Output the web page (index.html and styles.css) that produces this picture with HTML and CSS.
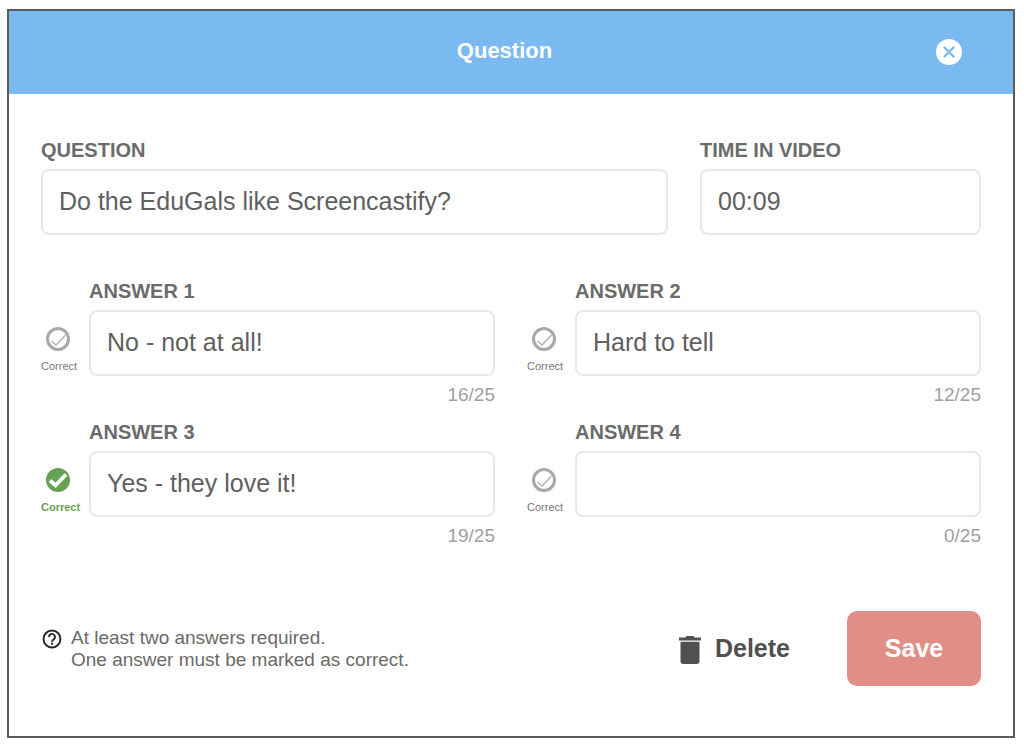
FILE: index.html
```html
<!DOCTYPE html>
<html lang="en">
<head>
<meta charset="utf-8">
<title>Question</title>
<link rel="stylesheet" href="styles.css">
</head>
<body>
<form class="dialog">
  <header class="dialog-header">
    <h1 class="dialog-title">Question</h1>
    <button class="close" type="button" aria-label="Close">
      <svg width="26" height="26" viewBox="0 0 26 26"><circle cx="13" cy="13" r="13" fill="#fff"/><path d="M8.500 8.500l9 9M17.500 8.500l-9 9" stroke="#7abaf0" stroke-width="2.400" stroke-linecap="round"/></svg>
    </button>
  </header>
  <main class="dialog-body">
    <div class="top-row">
      <div class="field">
        <label class="field-label" for="question">QUESTION</label>
        <input class="text-box" id="question" type="text" value="Do the EduGals like Screencastify?">
      </div>
      <div class="field">
        <label class="field-label" for="time">TIME IN VIDEO</label>
        <input class="text-box" id="time" type="text" value="00:09">
      </div>
    </div>
    <div class="answers">
      <div class="answer">
        <label class="field-label answer-label" for="a1">ANSWER 1</label>
        <label class="mark"><span class="mark-icon"><input class="mark-radio" type="radio" name="correct"><svg class="tick" viewBox="0 0 24 24"><path d="M5.500 14l4.500 4L19.500 8" fill="none" stroke="#b0b0b0" stroke-width="1.300"/></svg></span><span class="mark-text">Correct</span></label>
        <input class="text-box" id="a1" type="text" value="No - not at all!">
        <span class="count">16/25</span>
      </div>
      <div class="answer">
        <label class="field-label answer-label" for="a2">ANSWER 2</label>
        <label class="mark"><span class="mark-icon"><input class="mark-radio" type="radio" name="correct"><svg class="tick" viewBox="0 0 24 24"><path d="M5.500 14l4.500 4L19.500 8" fill="none" stroke="#b0b0b0" stroke-width="1.300"/></svg></span><span class="mark-text">Correct</span></label>
        <input class="text-box" id="a2" type="text" value="Hard to tell">
        <span class="count">12/25</span>
      </div>
      <div class="answer">
        <label class="field-label answer-label" for="a3">ANSWER 3</label>
        <label class="mark mark-chosen"><span class="mark-icon"><input class="mark-radio" type="radio" name="correct" checked><svg class="tick" viewBox="0 0 24 24"><path d="M4 12.500l5.500 4.800L20 6.500" fill="none" stroke="#fff" stroke-width="3.800"/></svg></span><span class="mark-text">Correct</span></label>
        <input class="text-box" id="a3" type="text" value="Yes - they love it!">
        <span class="count">19/25</span>
      </div>
      <div class="answer">
        <label class="field-label answer-label" for="a4">ANSWER 4</label>
        <label class="mark"><span class="mark-icon"><input class="mark-radio" type="radio" name="correct"><svg class="tick" viewBox="0 0 24 24"><path d="M5.500 14l4.500 4L19.500 8" fill="none" stroke="#b0b0b0" stroke-width="1.300"/></svg></span><span class="mark-text">Correct</span></label>
        <input class="text-box" id="a4" type="text" value="">
        <span class="count">0/25</span>
      </div>
    </div>
    <footer class="actions">
      <svg class="help" width="20" height="20" viewBox="0 0 20 20" fill="none" stroke="#262626"><circle cx="10" cy="10" r="8.500" stroke-width="1.900"/><path d="M7 8a3 3 0 1 1 4.700 2.400c-1.100.8-1.700 1.200-1.700 2.300" stroke-width="1.900"/><path d="M10 13.800v1.900" stroke-width="2"/></svg>
      <p class="hint">At least two answers required.<br>One answer must be marked as correct.</p>
      <button class="delete" type="button">
        <svg width="22" height="30" viewBox="0 0 22 30" fill="#505050"><path d="M0 3.500h6.500L7.500 2h7l1 1.500H22v3H0zM1.500 7.800h19V27a3 3 0 0 1-3 3h-13a3 3 0 0 1-3-3z"/></svg>
        Delete
      </button>
      <button class="save" type="submit">Save</button>
    </footer>
  </main>
</form>
</body>
</html>
```
FILE: styles.css
```css
* {
  box-sizing: border-box;
}

body {
  margin: 9px 9px 7px 7px;
  background: #fff;
  font-family: "Liberation Sans", Arial, sans-serif;
  color: #555;
}

button {
  border: 0;
  padding: 0;
  background: none;
  font-family: inherit;
  cursor: pointer;
}

svg {
  display: block;
}

.dialog {
  border: 2px solid #5c5c5c;
}

.dialog-header {
  display: grid;
  grid-template-columns: 1fr auto 1fr;
  align-items: center;
  height: 83px;
  padding: 0 51px 2px 38px;
  background: #7abaf0;
}

.dialog-title {
  grid-column: 2;
  margin: 0;
  padding-bottom: 2px;
  font-size: 22px;
  line-height: 26px;
  color: #fff;
}

.close {
  justify-self: end;
}

.dialog-body {
  padding: 44px 32px 50px;
}

.top-row {
  display: grid;
  grid-template-columns: 627fr 281fr;
  gap: 32px;
}

.field {
  display: grid;
  gap: 7px;
}

.field-label {
  font-size: 20px;
  font-weight: bold;
  line-height: 24px;
  color: #6b6b6b;
}

.text-box {
  width: 100%;
  min-width: 0;
  height: 66px;
  padding: 0 16px 2px;
  border: 2px solid #e8e8e8;
  border-radius: 8px;
  background: #fff;
  font-family: inherit;
  font-size: 25px;
  color: #606060;
}

.answers {
  display: grid;
  grid-template-columns: 1fr 1fr;
  gap: 15px 32px;
  margin-top: 44px;
}

.answer {
  display: grid;
  grid-template-columns: 48px 1fr;
}

.answer-label {
  grid-column: 2;
  margin-bottom: 7px;
}

.mark {
  padding-top: 17px;
  color: #777;
}

.mark-icon {
  display: grid;
  width: 24px;
  margin-left: 5px;
}

.mark-radio,
.tick {
  grid-area: 1 / 1;
  width: 24px;
  height: 24px;
  margin: 0;
}

.mark-radio {
  appearance: none;
  border: 3px solid #a8a8a8;
  border-radius: 50%;
}

.mark-radio:checked {
  border-color: #66a253;
  background: #66a253;
}

.tick {
  pointer-events: none;
}

.mark-text {
  display: block;
  margin-top: 8px;
  font-size: 11px;
  line-height: 14px;
}

.mark-chosen {
  font-weight: bold;
  color: #66a253;
}

.count {
  grid-column: 2;
  justify-self: end;
  margin-top: 9px;
  font-size: 19px;
  line-height: 20px;
  color: #a0a0a0;
}

.actions {
  display: flex;
  align-items: center;
  margin-top: 65px;
}

.help {
  margin: 0 9px 19px 1px;
}

.hint {
  margin: 0 auto 0 0;
  font-size: 19px;
  line-height: 22px;
  color: #6a6a6a;
}

.delete {
  display: flex;
  align-items: center;
  gap: 14px;
  margin-right: 57px;
  font-size: 25px;
  font-weight: bold;
  color: #505050;
}

.save {
  width: 134px;
  height: 75px;
  border-radius: 10px;
  background: #e18e87;
  font-size: 25px;
  font-weight: bold;
  color: #fff;
}
```
